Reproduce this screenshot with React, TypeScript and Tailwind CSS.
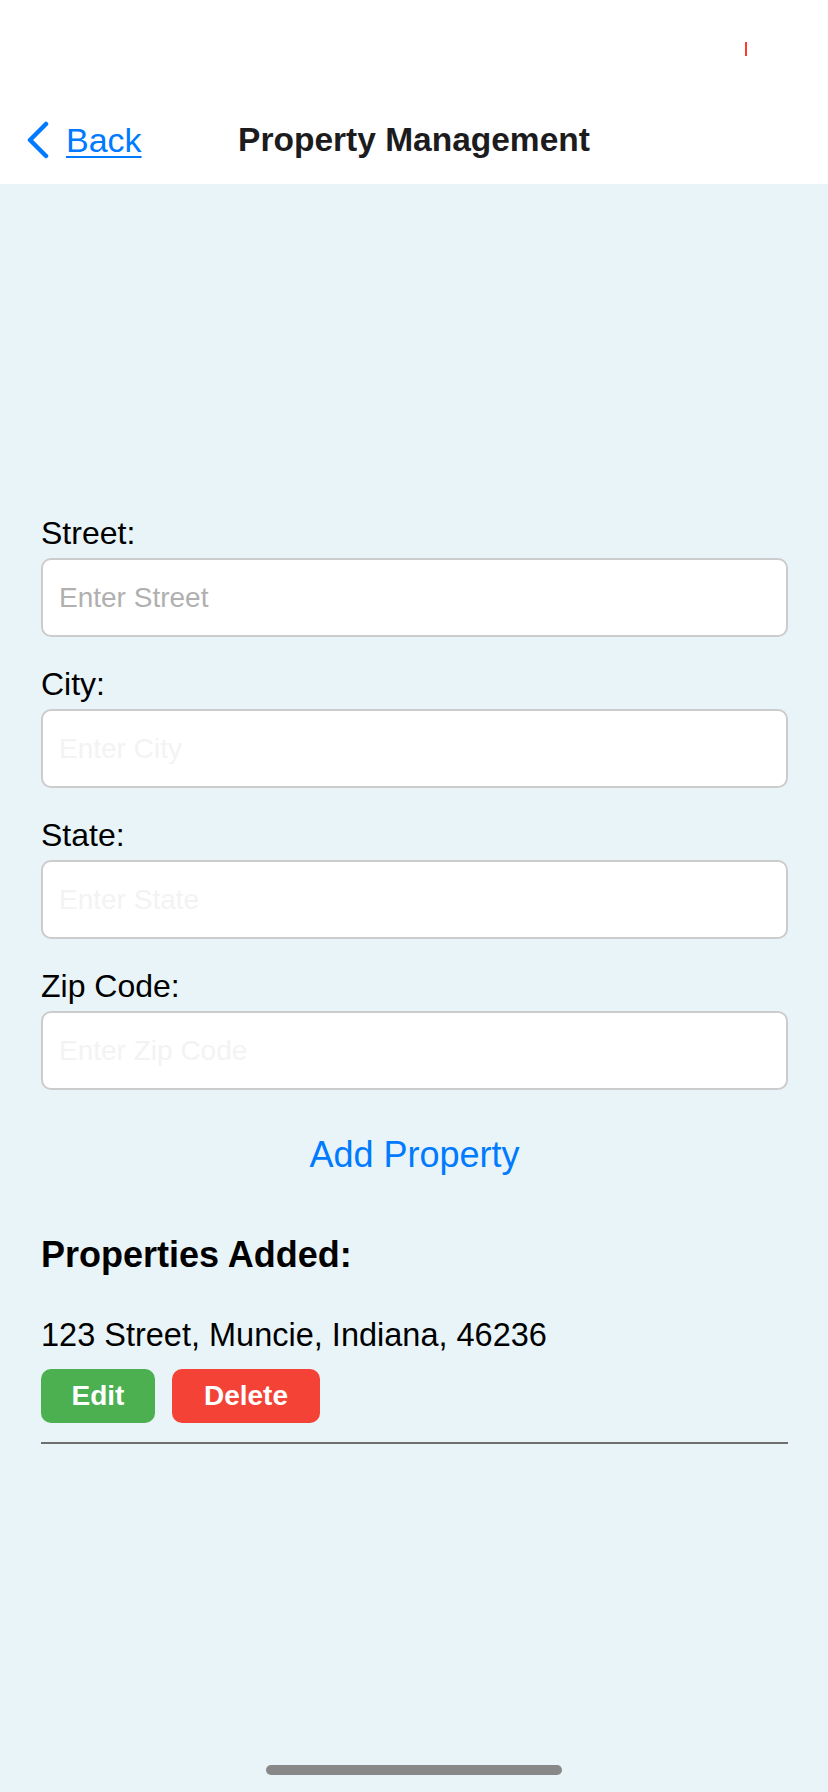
import React from "react";

const FONT = { fontFamily: '"Liberation Sans", Arial, sans-serif' };

function Field({ label, placeholder, faint }: { label: string; placeholder: string; faint?: boolean }) {
  return (
    <div className="flex flex-col">
      <div className="text-[32px] leading-[38px] text-black">{label}</div>
      <input
        readOnly
        placeholder={placeholder}
        className={
          "mt-[6px] h-[79px] w-full rounded-[10px] border-2 border-[#cccccc] bg-white px-[16px] text-[28px] outline-none " +
          (faint ? "placeholder:text-[#f3f3f3]" : "placeholder:text-[#b0b0b0]")
        }
      />
    </div>
  );
}

export default function App() {
  return (
    <div className="relative min-h-[1792px] w-[828px] overflow-hidden bg-[#e8f4f8]" style={FONT}>
      {/* Header */}
      <div className="bg-white">
        <div className="relative h-[96px]">
          <div className="absolute left-[745px] top-[42px] h-[14px] w-[2px] bg-[#ff3b30]" />
        </div>
        <div className="grid h-[88px] grid-cols-[1fr_auto_1fr] items-center">
          <div className="flex items-center pl-[26px]">
            <svg width="24" height="38" viewBox="0 0 24 38" className="mr-[16px]">
              <polyline
                points="20,3 4,19 20,35"
                fill="none"
                stroke="#007AFF"
                strokeWidth="4.5"
                strokeLinecap="round"
                strokeLinejoin="round"
              />
            </svg>
            <span className="text-[34px] leading-[40px] text-[#007AFF] underline decoration-2 underline-offset-[4px]">
              Back
            </span>
          </div>
          <div className="text-[33.5px] font-semibold leading-[40px] text-[#1c1c1e]">Property Management</div>
          <div />
        </div>
      </div>

      {/* Content */}
      <div className="pl-[41px] pr-[40px] pt-[330px]">
        <div className="flex flex-col gap-[28px]">
          <Field label="Street:" placeholder="Enter Street" />
          <Field label="City:" placeholder="Enter City" faint />
          <Field label="State:" placeholder="Enter State" faint />
          <Field label="Zip Code:" placeholder="Enter Zip Code" faint />
        </div>

        <div className="mt-[44px] text-center text-[36px] leading-[42px] text-[#007AFF]">Add Property</div>

        <div className="mt-[58px] text-[36px] font-bold leading-[42px] text-black">Properties Added:</div>

        <div className="mt-[40px] text-[32.5px] leading-[38px] text-black">123 Street, Muncie, Indiana, 46236</div>

        <div className="mt-[15px] flex gap-[17px]">
          <div className="flex h-[54px] w-[114px] items-center justify-center rounded-[10px] bg-[#4caf50] text-[28px] font-bold text-white">
            Edit
          </div>
          <div className="flex h-[54px] w-[148px] items-center justify-center rounded-[10px] bg-[#f44336] text-[28px] font-bold text-white">
            Delete
          </div>
        </div>

        <div className="mt-[19px] h-[2px] w-full bg-[#6e6e6e]" />
      </div>

      {/* Home indicator */}
      <div className="absolute bottom-[17px] left-[266px] h-[10px] w-[296px] rounded-full bg-[#888888]" />
    </div>
  );
}
